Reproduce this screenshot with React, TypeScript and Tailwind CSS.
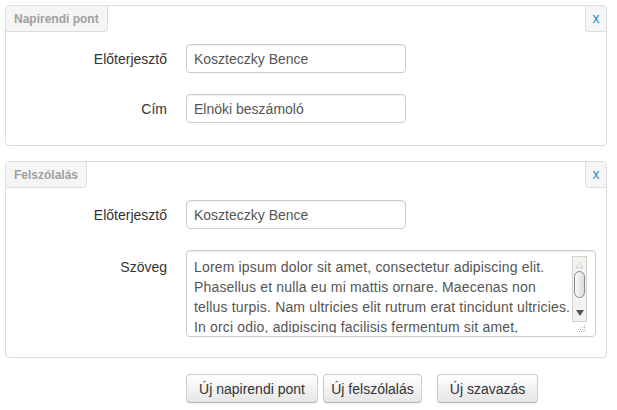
import React from "react";

const font = { fontFamily: '"Liberation Sans", Arial, sans-serif' };

function Tab({ title }: { title: string }) {
  return (
    <div className="flex items-start justify-between">
      <div className="h-[26px] px-[8px] pt-[1px] flex items-center bg-[#f5f5f5] border-r border-b border-[#dddddd] rounded-br-[4px] rounded-tl-[3px] text-[12px] font-bold text-[#a0a0a0]">
        {title}
      </div>
      <div className="h-[26px] w-[21px] flex items-center justify-center bg-[#f5f5f5] border-l border-b border-[#dddddd] rounded-bl-[4px] rounded-tr-[3px] text-[14px] text-[#1e90d6]">
        x
      </div>
    </div>
  );
}

function Row({
  label,
  children,
  top,
}: {
  label: string;
  children: React.ReactNode;
  top?: boolean;
}) {
  return (
    <div className={`flex ${top ? "items-start" : "items-center"}`}>
      <div
        className={`w-[161px] text-right text-[14px] text-[#333333] ${top ? "pt-[7px]" : "pt-[2px]"}`}
      >
        {label}
      </div>
      <div className="ml-[19px]">{children}</div>
    </div>
  );
}

function Input({ value }: { value: string }) {
  return (
    <div className="w-[220px] h-[29px] px-[7px] pt-[2px] flex items-center bg-white border border-[#cccccc] rounded-[4px] shadow-[inset_0_1px_1px_rgba(0,0,0,0.075)] text-[14px] text-[#555555]">
      {value}
    </div>
  );
}

function FakeTextarea() {
  const lines = [
    "Lorem ipsum dolor sit amet, consectetur adipiscing elit.",
    "Phasellus et nulla eu mi mattis ornare. Maecenas non",
    "tellus turpis. Nam ultricies elit rutrum erat tincidunt ultricies.",
    "In orci odio, adipiscing facilisis fermentum sit amet,",
  ];
  return (
    <div className="relative w-[410px] h-[87px] bg-white border border-[#cccccc] rounded-[4px] shadow-[inset_0_1px_1px_rgba(0,0,0,0.075)] overflow-hidden">
      <div className="pl-[7px] pt-[6px] h-[82px] overflow-hidden text-[14px] leading-[20px] tracking-[0.17px] text-[#555555] whitespace-nowrap">
        {lines.map((l) => (
          <div key={l}>{l}</div>
        ))}
      </div>
      {/* scrollbar */}
      <div className="absolute left-[385px] top-[5px] w-[15px] h-[66px] bg-[#f2f2f0] border border-[#d6d3cc] flex flex-col items-center">
        <svg width="9" height="8" viewBox="0 0 9 8" className="mt-[4px]">
          <path d="M4.5 1 L8 7 L1 7 Z" fill="none" stroke="#d0d0d0" />
        </svg>
        <div className="mt-[2px] w-[11px] h-[27px] rounded-[6px] border border-[#8a8a8a] bg-gradient-to-r from-[#fafafa] to-[#dcdcdc]" />
        <div className="flex-1" />
        <svg width="8" height="6" viewBox="0 0 8 6" className="mb-[5px]">
          <path d="M0 0 L8 0 L4 6 Z" fill="#555555" />
        </svg>
      </div>
      <svg
        width="7"
        height="7"
        viewBox="0 0 7 7"
        className="absolute left-[392px] top-[74px]"
      >
        <rect x="5" y="0" width="1" height="1" fill="#b0b0b0" />
        <rect x="3" y="2" width="1" height="1" fill="#b0b0b0" />
        <rect x="5" y="2" width="1" height="1" fill="#b0b0b0" />
        <rect x="1" y="4" width="1" height="1" fill="#b0b0b0" />
        <rect x="3" y="4" width="1" height="1" fill="#b0b0b0" />
        <rect x="5" y="4" width="1" height="1" fill="#b0b0b0" />
        <rect x="0" y="6" width="1" height="1" fill="#b0b0b0" />
        <rect x="2" y="6" width="1" height="1" fill="#b0b0b0" />
        <rect x="4" y="6" width="1" height="1" fill="#b0b0b0" />
        <rect x="6" y="6" width="1" height="1" fill="#b0b0b0" />
      </svg>
    </div>
  );
}

function Button({ children, className = "" }: { children: React.ReactNode; className?: string }) {
  return (
    <button
      className={`h-[29px] px-0 pt-[2px] whitespace-nowrap text-center text-[14px] text-[#333333] rounded-[4px] border border-[#cccccc] border-b-[#b3b3b3] bg-gradient-to-b from-white to-[#e6e6e6] shadow-[inset_0_1px_0_rgba(255,255,255,0.2),0_1px_2px_rgba(0,0,0,0.05)] ${className}`}
    >
      {children}
    </button>
  );
}

export default function App() {
  return (
    <div className="w-[617px] h-[410px] bg-white pt-[5px] pl-[5px]" style={font}>
      <div className="w-[602px] h-[141px] border border-[#dddddd] rounded-[4px]">
        <Tab title="Napirendi pont" />
        <div className="flex flex-col gap-[21px] pt-[12px]">
          <Row label="Előterjesztő">
            <Input value="Koszteczky Bence" />
          </Row>
          <Row label="Cím">
            <Input value="Elnöki beszámoló" />
          </Row>
        </div>
      </div>

      <div className="mt-[15px] w-[602px] h-[197px] border border-[#dddddd] rounded-[4px]">
        <Tab title="Felszólalás" />
        <div className="flex flex-col gap-[21px] pt-[12px]">
          <Row label="Előterjesztő">
            <Input value="Koszteczky Bence" />
          </Row>
          <Row label="Szöveg" top>
            <FakeTextarea />
          </Row>
        </div>
      </div>

      <div className="mt-[16px] pl-[181px] flex">
        <Button className="w-[132px]">Új napirendi pont</Button>
        <Button className="w-[99px] ml-[5px]">Új felszólalás</Button>
        <Button className="w-[101px] ml-[15px]">Új szavazás</Button>
      </div>
    </div>
  );
}
